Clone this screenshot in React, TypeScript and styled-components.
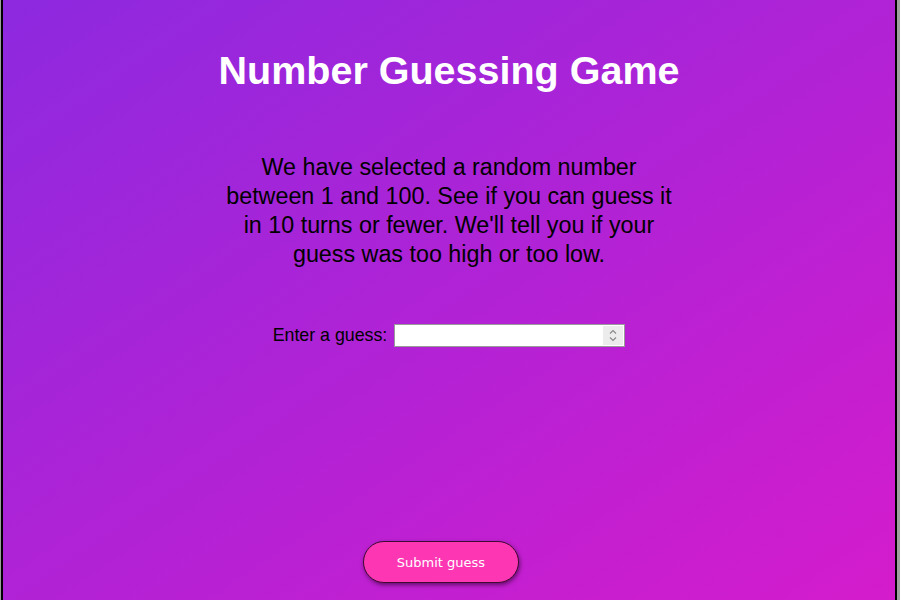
import React from "react";
import styled, { createGlobalStyle } from "styled-components";

const Global = createGlobalStyle`
  html, body { margin: 0; padding: 0; background: #a0a0a0; overflow: hidden; }
  body { font-family: "Liberation Sans", Arial, sans-serif; }
`;

const Frame = styled.div`
  height: 600px;
  padding: 0 3px 0 1px;
  background: #a0a0a0;
  box-sizing: border-box;
`;

const Stage = styled.main`
  height: 100%;
  box-sizing: border-box;
  border-left: 2px solid #000;
  border-right: 2px solid #000;
  background: linear-gradient(to bottom right, #8d29df, #d41ccc);
  display: flex;
  flex-direction: column;
  align-items: center;
`;

const Title = styled.h1`
  margin: 48px 0 0;
  font-size: 39.5px;
  line-height: 45px;
  font-weight: bold;
  color: #fff;
`;

const Intro = styled.p`
  margin: 60px 0 0;
  width: 460px;
  text-align: center;
  font-size: 23.3px;
  line-height: 29px;
  color: #000;
`;

const GuessRow = styled.div`
  margin-top: 55px;
  display: flex;
  align-items: center;
  gap: 7px;
`;

const Label = styled.label`
  font-size: 17.8px;
  color: #000;
`;

const InputWrap = styled.div`
  position: relative;
  width: 231px;
  height: 23px;
`;

const Input = styled.input`
  width: 100%;
  height: 100%;
  box-sizing: border-box;
  border: 1px solid #9a9a9a;
  background: #fff;
  margin: 0;
  padding: 0 24px 0 4px;
  font-size: 14px;
  outline: none;
`;

const Spinner = styled.span`
  position: absolute;
  right: 2px;
  top: 2px;
  width: 20px;
  height: 19px;
  background: #ececec;
  display: flex;
  align-items: center;
  justify-content: center;
`;

const Spacer = styled.div`
  flex: 1;
`;

const SubmitButton = styled.button`
  margin: 0 16px 17px 0;
  width: 156px;
  height: 42px;
  border-radius: 21px;
  border: 1px solid #3e0a32;
  background: #fd37b4;
  color: #fff;
  font-family: "DejaVu Sans", Verdana, sans-serif;
  font-size: 13px;
  box-shadow: 1px 2px 4px rgba(40, 0, 40, 0.6);
  cursor: pointer;
`;

export default function App() {
  return (
    <>
      <Global />
      <Frame>
        <Stage>
          <Title>Number Guessing Game</Title>
          <Intro>
            We have selected a random number between 1 and 100. See if you can
            guess it in 10 turns or fewer. We'll tell you if your guess was too
            high or too low.
          </Intro>
          <GuessRow>
            <Label htmlFor="guessField">Enter a guess:</Label>
            <InputWrap>
              <Input id="guessField" type="text" />
              <Spinner>
                <svg width="10" height="15" viewBox="0 0 10 15">
                  <path d="M2 5.5 L5 2.5 L8 5.5" fill="none" stroke="#8a8a8a" strokeWidth="1.2" />
                  <path d="M2 9.5 L5 12.5 L8 9.5" fill="none" stroke="#8a8a8a" strokeWidth="1.2" />
                </svg>
              </Spinner>
            </InputWrap>
          </GuessRow>
          <Spacer />
          <SubmitButton>Submit guess</SubmitButton>
        </Stage>
      </Frame>
    </>
  );
}
